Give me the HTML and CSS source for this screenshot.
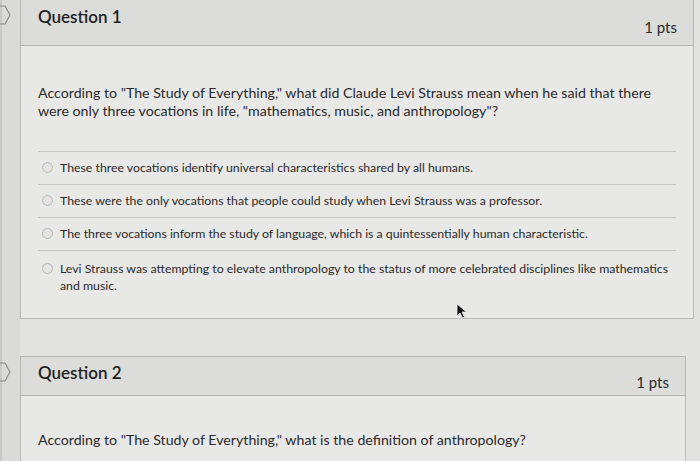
FILE: index.html
```html
<!DOCTYPE html>
<html>
<head>
<meta charset="utf-8">
<link rel="stylesheet" href="styles.css">
</head>
<body>
<div class="page">
  <div class="gutter">
    <svg class="flag flag1" width="12" height="22" viewBox="0 0 12 22"><path d="M-2 2 H5 L10 11 L5 20 H-2" fill="none" stroke="#8a8a8a" stroke-width="1.2"/></svg>
    <svg class="flag flag2" width="12" height="22" viewBox="0 0 12 22"><path d="M-2 2 H5 L10 11 L5 20 H-2" fill="none" stroke="#8a8a8a" stroke-width="1.2"/></svg>
  </div>
  <div class="main">
    <section class="card card1">
      <header class="head">
        <h2 class="title">Question 1</h2>
        <span class="pts">1 pts</span>
      </header>
      <div class="body">
        <p class="qtext">According to "The Study of Everything," what did Claude Levi Strauss mean when he said that there were only three vocations in life, "mathematics, music, and anthropology"?</p>
        <ul class="answers">
          <li class="ans"><span class="radio"></span><span>These three vocations identify universal characteristics shared by all humans.</span></li>
          <li class="ans"><span class="radio"></span><span>These were the only vocations that people could study when Levi Strauss was a professor.</span></li>
          <li class="ans"><span class="radio"></span><span>The three vocations inform the study of language, which is a quintessentially human characteristic.</span></li>
          <li class="ans last"><span class="radio"></span><span>Levi Strauss was attempting to elevate anthropology to the status of more celebrated disciplines like mathematics and music.</span></li>
        </ul>
      </div>
    </section>
    <section class="card card2">
      <header class="head head2">
        <h2 class="title">Question 2</h2>
        <span class="pts">1 pts</span>
      </header>
      <div class="body body2">
        <p class="qtext">According to "The Study of Everything," what is the definition of anthropology?</p>
      </div>
    </section>
  </div>
  <svg class="cursor" width="12" height="16" viewBox="0 0 12 16"><path d="M1 1 L1 13 L4 10 L6.5 15 L8.5 14 L6 9 L10.5 9 Z" fill="#111" stroke="#eee" stroke-width="0.8"/></svg>
</div>
</body>
</html>
```

FILE: styles.css
```css
html, body {
  margin: 0;
  padding: 0;
}
body {
  width: 700px;
  height: 461px;
  overflow: hidden;
  background: #e2e2e0;
  font-family: Lato, "Open Sans", sans-serif;
  color: #2d3b45;
}
.page {
  position: relative;
  display: flex;
  height: 461px;
}
.gutter {
  position: relative;
  width: 20px;
  flex: none;
  background: #dadad8;
  border-left: 2px solid #c9c9c7;
  box-sizing: border-box;
}
.flag {
  position: absolute;
  left: -2px;
}
.flag1 { top: 4px; }
.flag2 { top: 361px; }
.main {
  flex: 1;
  display: flex;
  flex-direction: column;
}
.card {
  border: 1px solid #b9b9b7;
  background: #e8e8e6;
  box-sizing: border-box;
}
.card1 {
  width: 674px;
  border-top-color: #c4c4c2;
  margin-top: -1px;
}
.card2 {
  flex: 1;
  width: 666px;
  margin-top: 37px;
  border-bottom: none;
}
.head {
  display: flex;
  justify-content: space-between;
  background: #dcdcda;
  border-bottom: 1px solid #b3b3b1;
  height: 46px;
  box-sizing: border-box;
  padding: 0 16px 0 17px;
}
.head2 {
  height: 39px;
}
.title {
  margin: 5px 0 0;
  font-size: 17px;
  font-weight: 600;
  color: #1f1f1f;
  line-height: 24px;
}
.head2 .title {
  margin-top: 4px;
}
.pts {
  margin-top: 17px;
  font-size: 15px;
  color: #2a2a2a;
  line-height: 20px;
}
.head2 .pts {
  margin-top: 15px;
}
.body {
  padding: 38px 18px 0 17px;
}
.body2 {
  padding-top: 35px;
}
.qtext {
  margin: 0;
  font-size: 14.2px;
  line-height: 18px;
  color: #2a2a2a;
}
.answers {
  list-style: none;
  margin: 31px 0 0;
  padding: 0;
  width: 638px;
}
.ans {
  display: flex;
  align-items: flex-start;
  border-top: 1px solid #c6c6c4;
  padding: 7px 0 8px 4px;
  font-size: 12.3px;
  line-height: 17px;
  color: #2a2a2a;
}
.ans.last {
  padding-top: 9px;
  padding-bottom: 24px;
}
.radio {
  flex: none;
  width: 9px;
  height: 9px;
  border: 1px solid #b8b8b6;
  border-radius: 50%;
  background: #e4e4e2;
  margin: 3px 7px 0 0;
}
.cursor {
  position: absolute;
  left: 456px;
  top: 303px;
}
```
